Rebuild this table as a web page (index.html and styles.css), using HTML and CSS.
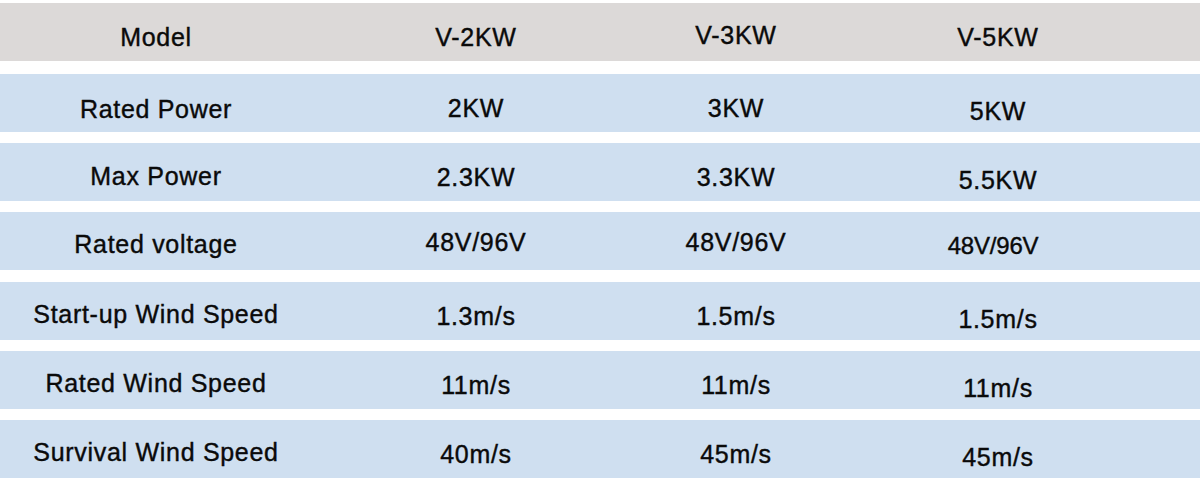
FILE: index.html
```html
<!DOCTYPE html>
<html lang="en">
<head>
<meta charset="utf-8">
<title>Specifications</title>
<link rel="stylesheet" href="styles.css">
</head>
<body>
<div class="spec">
  <div class="row head">
    <div class="cell">Model</div>
    <div class="cell">V-2KW</div>
    <div class="cell hi">V-3KW</div>
    <div class="cell">V-5KW</div>
  </div>
  <div class="rows">
    <div class="row">
      <div class="cell lbl-lo">Rated Power</div>
      <div class="cell">2KW</div>
      <div class="cell">3KW</div>
      <div class="cell last">5KW</div>
    </div>
    <div class="row">
      <div class="cell lbl-mid">Max Power</div>
      <div class="cell">2.3KW</div>
      <div class="cell">3.3KW</div>
      <div class="cell last">5.5KW</div>
    </div>
    <div class="row">
      <div class="cell lbl-up">Rated voltage</div>
      <div class="cell hi2">48V/96V</div>
      <div class="cell hi2">48V/96V</div>
      <div class="cell last small">48V/96V</div>
    </div>
    <div class="row">
      <div class="cell lbl-up">Start-up Wind Speed</div>
      <div class="cell">1.3m/s</div>
      <div class="cell">1.5m/s</div>
      <div class="cell last">1.5m/s</div>
    </div>
    <div class="row">
      <div class="cell lbl-up">Rated Wind Speed</div>
      <div class="cell">11m/s</div>
      <div class="cell">11m/s</div>
      <div class="cell last">11m/s</div>
    </div>
    <div class="row">
      <div class="cell lbl-up">Survival Wind Speed</div>
      <div class="cell">40m/s</div>
      <div class="cell">45m/s</div>
      <div class="cell last">45m/s</div>
    </div>
  </div>
</div>
</body>
</html>
```
FILE: styles.css
```css
html, body {
  margin: 0;
  padding: 0;
  background: #ffffff;
}

body {
  font-family: "Liberation Sans", Arial, sans-serif;
  color: #0a0a0a;
  width: 1200px;
  height: 500px;
  overflow: hidden;
}

.spec {
  padding-top: 3px;
}

.row {
  display: grid;
  grid-template-columns: 312px 328px 192px 332px 36px;
  height: 58px;
  background: #cfdff0;
}

.row.head {
  background: #dcd9d8;
  margin-bottom: 13px;
}

.rows {
  display: flex;
  flex-direction: column;
  gap: 11.2px;
}

.cell {
  font-size: 25px;
  line-height: 25px;
  letter-spacing: 0.7px;
  text-align: center;
  padding-top: 22px;
  white-space: nowrap;
  -webkit-text-stroke: 0.4px #0a0a0a;
}

.cell.hi { padding-top: 20px; }
.cell.hi2 { padding-top: 18px; }
.cell.last { padding-top: 25px; }
.cell.lbl-lo { padding-top: 23px; }
.cell.lbl-mid { padding-top: 21px; }
.cell.lbl-up { padding-top: 20px; }

.cell.small {
  font-size: 24px;
  letter-spacing: -0.2px;
  padding-top: 20.5px;
  padding-right: 10px;
}
```
